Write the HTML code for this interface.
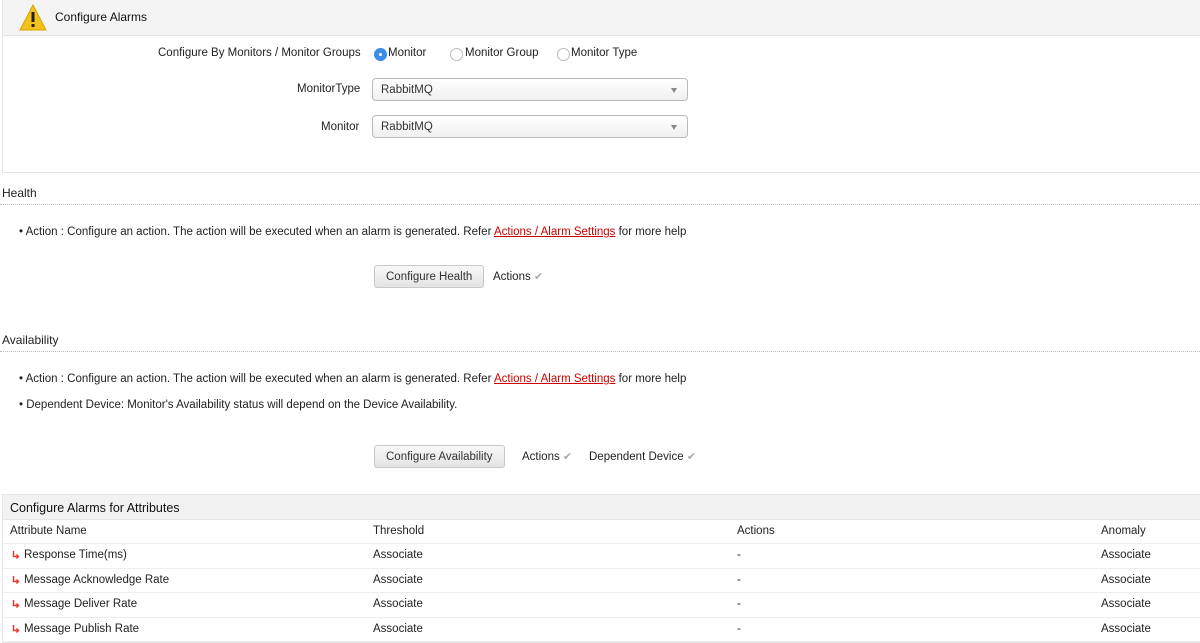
<!DOCTYPE html>
<html><head><style>
*{box-sizing:border-box;margin:0;padding:0}
body{width:1200px;height:643px;overflow:hidden;background:#fff;font-family:"Liberation Sans",sans-serif;font-size:11.5px;color:#222;position:relative}
.abs{position:absolute;white-space:nowrap}
.box{position:absolute;left:2px;top:0;width:1210px;height:173px;border:1px solid #e4e4e4;border-top:none}
.hdr{position:absolute;left:0;top:0;width:1210px;height:36px;background:#f4f4f4;border-bottom:1px solid #e4e4e4}
.radio{position:absolute;width:13px;height:13px;border-radius:50%;border:1px solid #bbb;background:#fff}
.radio.on{background:#3a8ee6;border-color:#3a8ee6}
.radio.on::after{content:"";position:absolute;left:4px;top:4px;width:3px;height:3px;border-radius:50%;background:#fff}
.sel{position:absolute;left:372px;width:316px;height:23px;border:1px solid #bbb;border-radius:4px;background:linear-gradient(#fff,#f0f0f0);padding:5px 8px;color:#333}
.sel::after{content:"";position:absolute;right:10px;top:9px;border-left:3px solid transparent;border-right:3px solid transparent;border-top:5px solid #888}
.sec{position:absolute;left:0;width:1200px;border-bottom:1px dotted #bbb;height:1px}
.btn{position:absolute;height:23px;border:1px solid #c8c8c8;border-radius:3px;background:linear-gradient(#f8f8f8,#e4e4e4);padding:5px 11px;color:#333;white-space:nowrap}
a{color:#c00;text-decoration:underline}
.chk{color:#aaa;font-size:11px;font-family:"DejaVu Sans",sans-serif}
.tbl{position:absolute;left:2px;top:494px;width:1210px;border:1px solid #e6e6e6}
.th{height:25px;background:#f2f2f2;border-bottom:1px solid #e6e6e6;padding:6px 7px;font-size:12.5px;color:#111}
.row{height:24.4px;border-bottom:1px solid #eee;position:relative}
.row>span{position:absolute;top:5px;white-space:nowrap}
.arr{display:inline-block;vertical-align:middle;margin-right:4px}
</style></head><body>
<div class="box"><div class="hdr"></div></div>
<svg class="abs" style="left:19px;top:4px" width="28" height="27" viewBox="0 0 28 27"><polygon points="14,1 27,26 1,26" fill="#f3c21c" stroke="#d9a400" stroke-width="1"/><rect x="12.5" y="8" width="3" height="10" fill="#222"/><rect x="12.5" y="20" width="3" height="3" fill="#222"/></svg>
<div class="abs" style="left:55px;top:10px;font-size:12px;color:#111">Configure Alarms</div>
<div class="abs" style="left:158px;top:47px">Configure By Monitors / Monitor Groups</div>
<div class="radio on" style="left:374px;top:48px"></div><div class="abs" style="left:388px;top:47px">Monitor</div>
<div class="radio" style="left:450px;top:48px"></div><div class="abs" style="left:465px;top:47px">Monitor Group</div>
<div class="radio" style="left:557px;top:48px"></div><div class="abs" style="left:571px;top:47px">Monitor Type</div>
<div class="abs" style="left:297px;top:83px">MonitorType</div>
<div class="sel" style="top:78px">RabbitMQ</div>
<div class="abs" style="left:321px;top:121px">Monitor</div>
<div class="sel" style="top:115px">RabbitMQ</div>

<div class="abs" style="left:2px;top:186px;font-size:12px">Health</div>
<div class="sec" style="top:204px"></div>
<div class="abs" style="left:19px;top:226px">• Action : Configure an action. The action will be executed when an alarm is generated. Refer <a>Actions / Alarm Settings</a> for more help</div>
<div class="btn" style="left:374px;top:265px">Configure Health</div>
<div class="abs" style="left:493px;top:270px">Actions <span class="chk">✔</span></div>

<div class="abs" style="left:2px;top:333px;font-size:12px">Availability</div>
<div class="sec" style="top:351px"></div>
<div class="abs" style="left:19px;top:373px">• Action : Configure an action. The action will be executed when an alarm is generated. Refer <a>Actions / Alarm Settings</a> for more help</div>
<div class="abs" style="left:19px;top:399px">• Dependent Device: Monitor's Availability status will depend on the Device Availability.</div>
<div class="btn" style="left:374px;top:445px">Configure Availability</div>
<div class="abs" style="left:522px;top:450px">Actions <span class="chk">✔</span></div>
<div class="abs" style="left:589px;top:450px">Dependent Device <span class="chk">✔</span></div>

<div class="tbl">
<div class="th">Configure Alarms for Attributes</div>
<div class="row"><span style="left:7px">Attribute Name</span><span style="left:370px">Threshold</span><span style="left:734px">Actions</span><span style="left:1098px">Anomaly</span></div>
<div class="row"><span style="left:9px"><svg class="arr" width="8" height="8" viewBox="0 0 8 8"><path d="M1.5 0V5.5H6.5M4.5 3.5L6.5 5.5L4.5 7.5" fill="none" stroke="#e33" stroke-width="1.4"/></svg>Response Time(ms)</span><span style="left:370px">Associate</span><span style="left:734px">-</span><span style="left:1098px">Associate</span></div>
<div class="row"><span style="left:9px"><svg class="arr" width="8" height="8" viewBox="0 0 8 8"><path d="M1.5 0V5.5H6.5M4.5 3.5L6.5 5.5L4.5 7.5" fill="none" stroke="#e33" stroke-width="1.4"/></svg>Message Acknowledge Rate</span><span style="left:370px">Associate</span><span style="left:734px">-</span><span style="left:1098px">Associate</span></div>
<div class="row"><span style="left:9px"><svg class="arr" width="8" height="8" viewBox="0 0 8 8"><path d="M1.5 0V5.5H6.5M4.5 3.5L6.5 5.5L4.5 7.5" fill="none" stroke="#e33" stroke-width="1.4"/></svg>Message Deliver Rate</span><span style="left:370px">Associate</span><span style="left:734px">-</span><span style="left:1098px">Associate</span></div>
<div class="row"><span style="left:9px"><svg class="arr" width="8" height="8" viewBox="0 0 8 8"><path d="M1.5 0V5.5H6.5M4.5 3.5L6.5 5.5L4.5 7.5" fill="none" stroke="#e33" stroke-width="1.4"/></svg>Message Publish Rate</span><span style="left:370px">Associate</span><span style="left:734px">-</span><span style="left:1098px">Associate</span></div>
</div>
</body></html>
